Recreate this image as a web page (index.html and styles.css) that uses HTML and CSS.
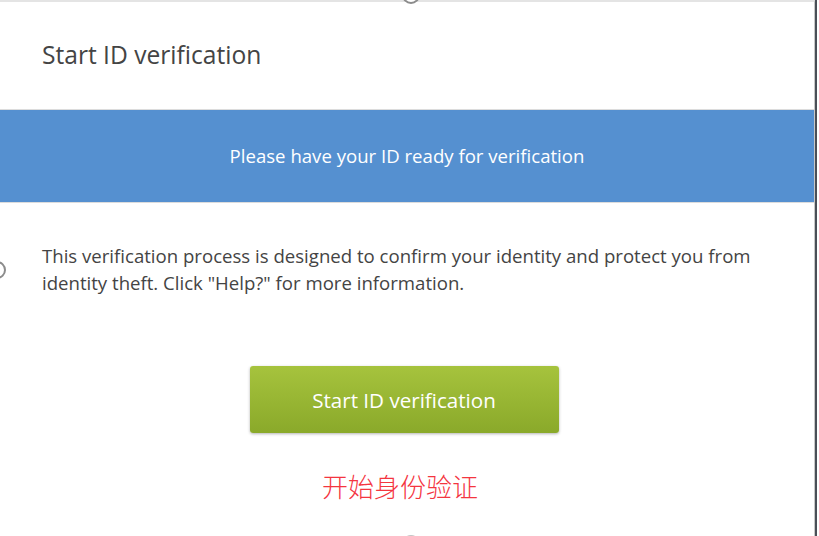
FILE: index.html
```html
<!DOCTYPE html>
<html>
<head>
<meta charset="utf-8">
<link rel="stylesheet" href="styles.css">
</head>
<body>
<div class="frame">
  <div class="dialog">
    <div class="header">
      <h1 class="title">Start ID verification</h1>
    </div>
    <div class="banner">Please have your ID ready for verification</div>
    <div class="content">
      <p class="desc">This verification process is designed to confirm your identity and protect you from identity theft. Click "Help?" for more information.</p>
      <div class="actions">
        <button class="btn">Start ID verification</button>
      </div>
      <div class="note">开始身份验证</div>
    </div>
  </div>
  <span class="handle handle-top"></span>
  <span class="handle handle-left"></span>
  <span class="handle handle-bottom"></span>
</div>
</body>
</html>
```
FILE: styles.css
```css
html, body {
  margin: 0;
  padding: 0;
  background: #ffffff;
  overflow: hidden;
}
.frame {
  position: relative;
  width: 819px;
  height: 536px;
  overflow: hidden;
}
.dialog {
  width: 815px;
  height: 536px;
  border-top: 2px solid #e4e4e4;
  border-right: 1px solid #c8c8c8;
  box-shadow: 2px 0 0 #4a4f57;
  box-sizing: border-box;
  font-family: "Open Sans", "Noto Sans", sans-serif;
  color: #444444;
}
.header {
  height: 107px;
  padding: 0 42px;
  box-sizing: border-box;
}
.title {
  margin: 0;
  padding-top: 38px;
  font-size: 24.6px;
  font-weight: 400;
  line-height: 30px;
  color: #444444;
}
.banner {
  height: 92px;
  background: #5590d0;
  border-top: 1px solid #dcdcdc;
  border-bottom: 1px solid #dcdcdc;
  color: #ffffff;
  font-size: 18.6px;
  line-height: 92px;
  text-align: center;
}
.content {
  padding: 0 42px;
}
.desc {
  margin: 0;
  padding-top: 39px;
  font-size: 18.6px;
  line-height: 27px;
  color: #444444;
}
.actions {
  display: flex;
  justify-content: center;
  padding-top: 70px;
  padding-right: 6px;
}
.btn {
  width: 309px;
  height: 67px;
  border: none;
  border-radius: 3px;
  background: linear-gradient(#a6c33d, #8aa92a);
  box-shadow: 0 1px 3px rgba(0,0,0,0.3);
  color: #ffffff;
  font-family: "Open Sans", "Noto Sans", sans-serif;
  font-size: 20.6px;
  padding: 0;
}
.note {
  text-align: center;
  padding-top: 37px;
  padding-right: 14px;
  font-family: "Noto Sans CJK SC", sans-serif;
  font-weight: 300;
  font-size: 26px;
  color: #f4353f;
  line-height: 32px;
}
.handle {
  position: absolute;
  width: 14px;
  height: 14px;
  border: 2px solid #8c8c8c;
  border-radius: 50%;
  background: #ffffff;
}
.handle-top { left: 402px; top: -14px; }
.handle-left { left: -12px; top: 261px; }
.handle-bottom { left: 402px; top: 535px; border-color: #c4c4c4; }
```
